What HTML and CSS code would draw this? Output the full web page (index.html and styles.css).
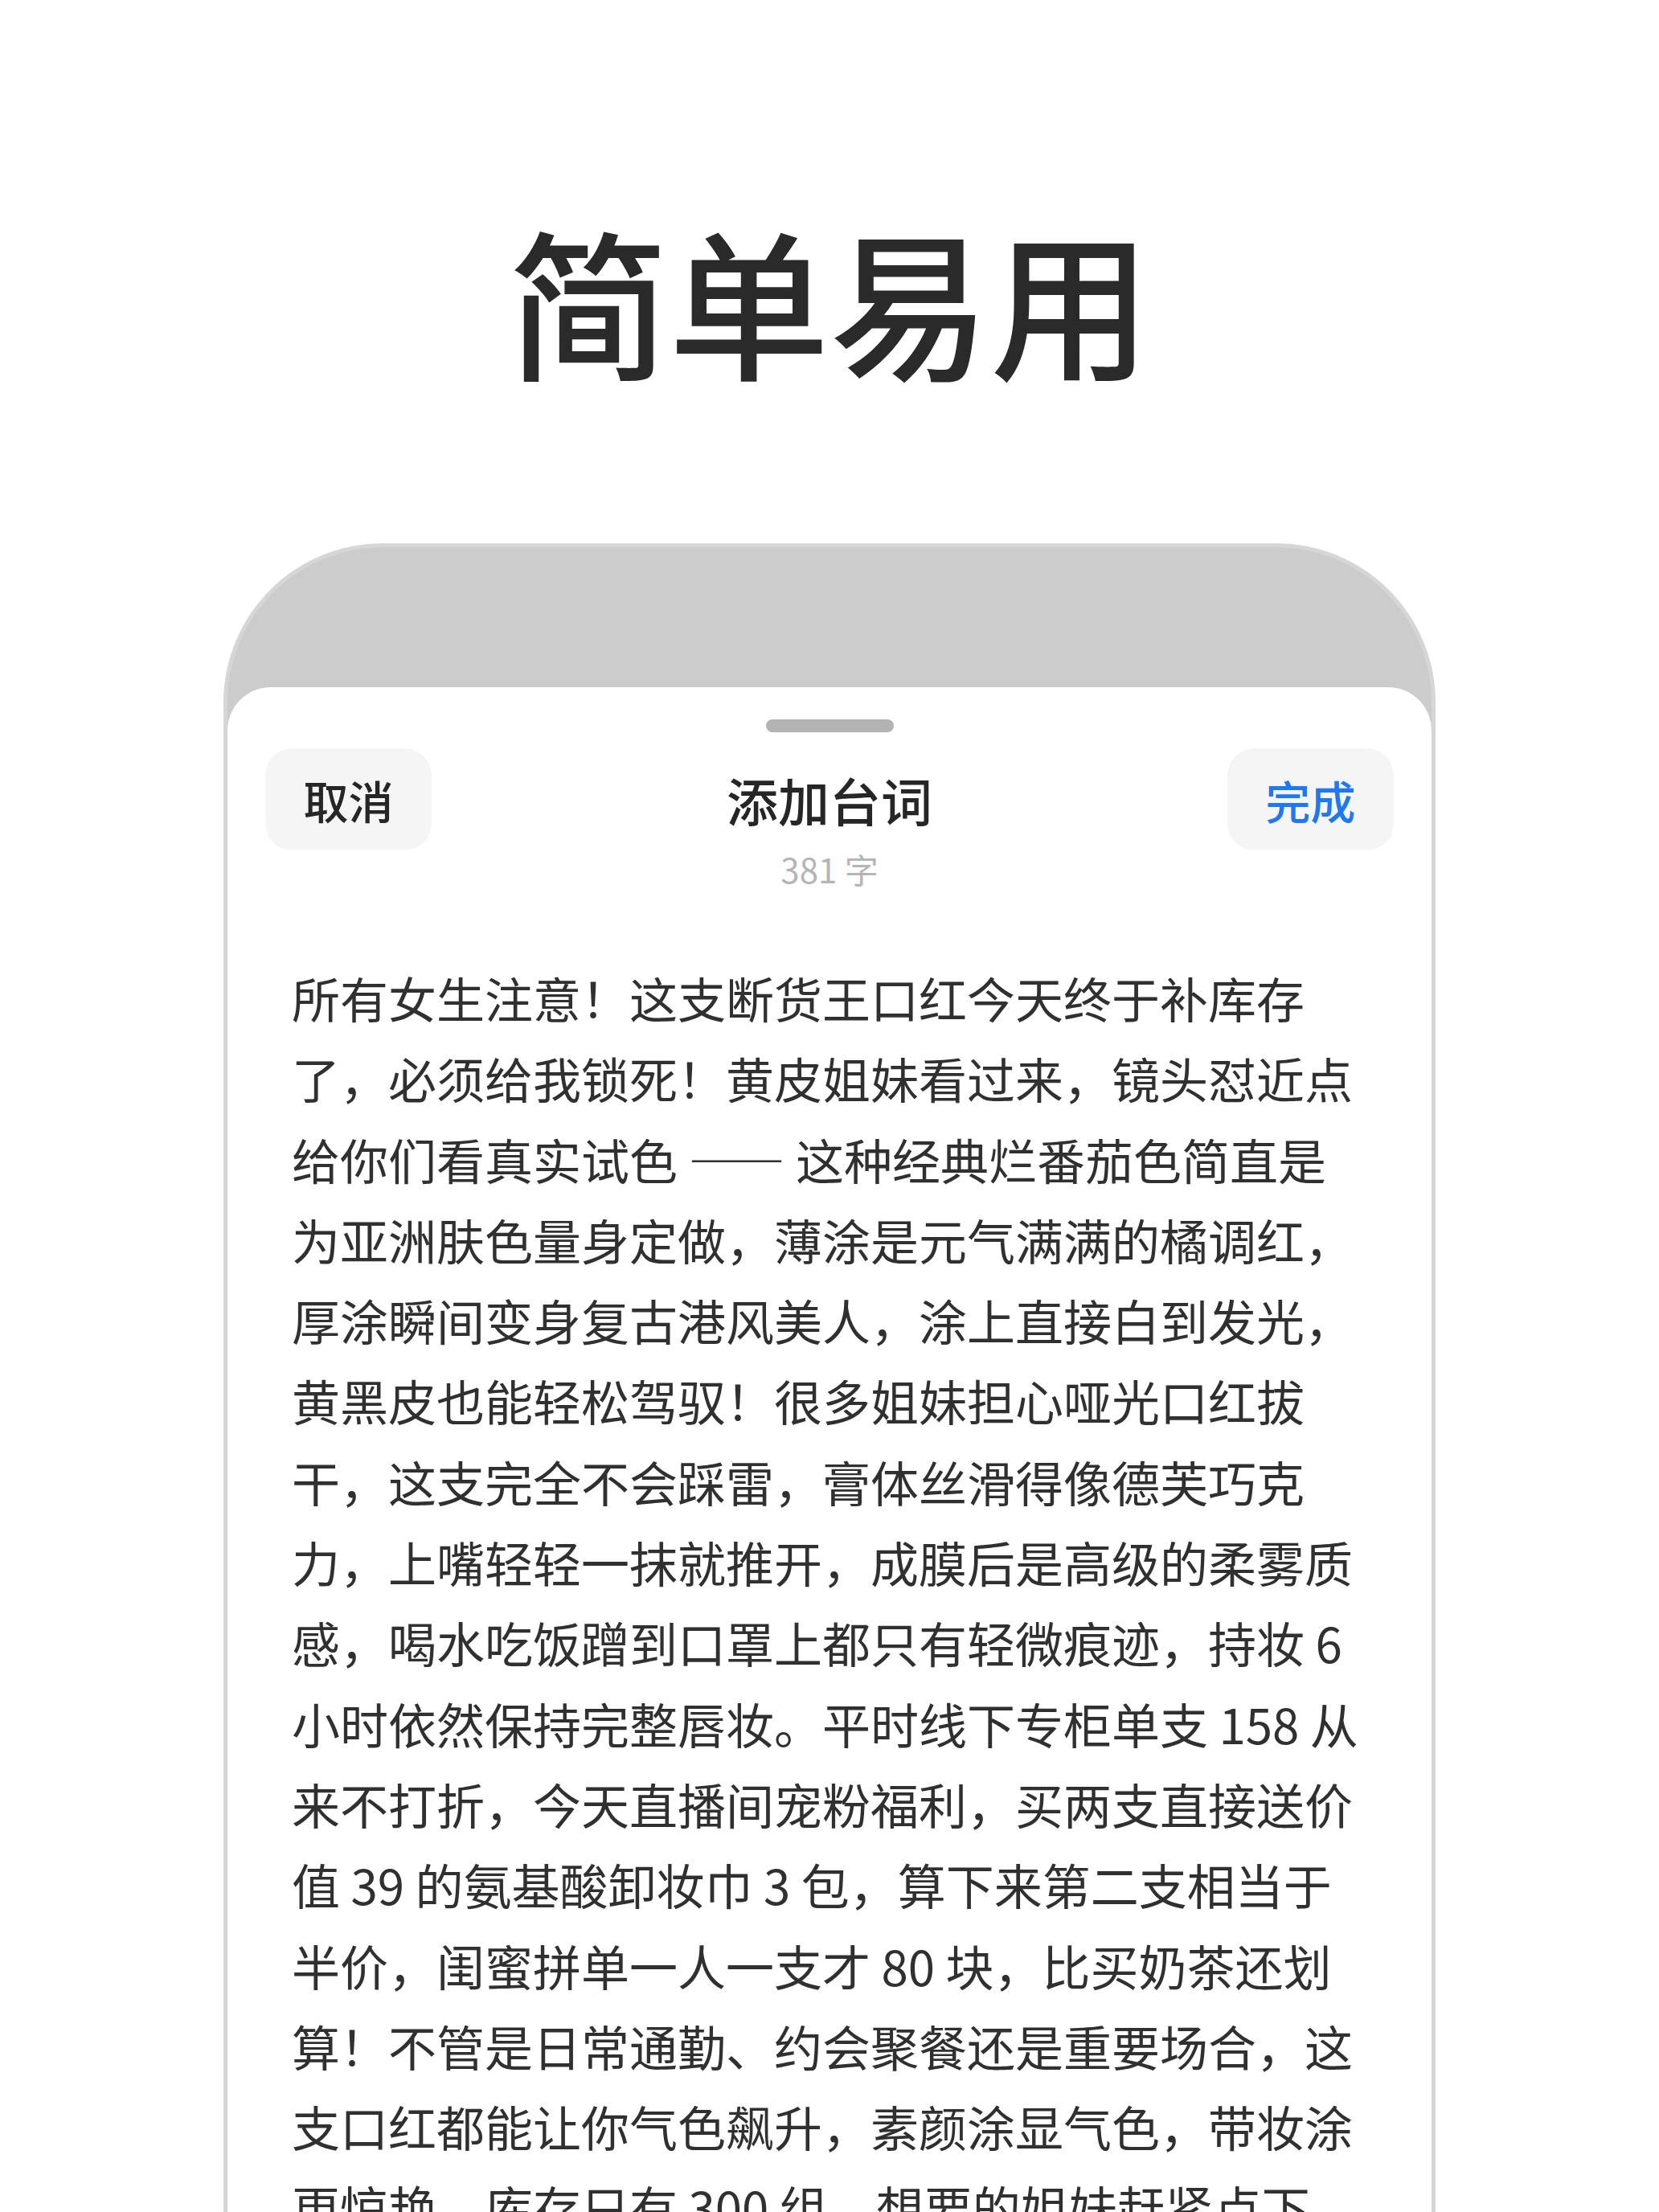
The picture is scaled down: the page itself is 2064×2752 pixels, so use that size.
FILE: index.html
```html
<!DOCTYPE html>
<html lang="zh-CN">
<head>
<meta charset="utf-8">
<title>简单易用</title>
<link rel="stylesheet" href="styles.css">
</head>
<body>
<main class="page">
  <h1 class="hero-title">简单易用</h1>
  <section class="phone">
    <div class="sheet">
      <div class="handle"></div>
      <header class="sheet-header">
        <button class="btn btn-cancel" type="button">取消</button>
        <div class="sheet-heading">
          <h2 class="sheet-title">添加台词</h2>
          <p class="sheet-count">381 字</p>
        </div>
        <button class="btn btn-done" type="button">完成</button>
      </header>
      <p class="script-text">所有女生注意！这支断货王口红今天终于补库存了，必须给我锁死！黄皮姐妹看过来，镜头怼近点给你们看真实试色 —— 这种经典烂番茄色简直是为亚洲肤色量身定做，薄涂是元气满满的橘调红，厚涂瞬间变身复古港风美人，涂上直接白到发光，黄黑皮也能轻松驾驭！很多姐妹担心哑光口红拔干，这支完全不会踩雷，膏体丝滑得像德芙巧克力，上嘴轻轻一抹就推开，成膜后是高级的柔雾质感，喝水吃饭蹭到口罩上都只有轻微痕迹，持妆 6 小时依然保持完整唇妆。平时线下专柜单支 158 从来不打折，今天直播间宠粉福利，买两支直接送价值 39 的氨基酸卸妆巾 3 包，算下来第二支相当于半价，闺蜜拼单一人一支才 80 块，比买奶茶还划算！不管是日常通勤、约会聚餐还是重要场合，这支口红都能让你气色飙升，素颜涂显气色，带妆涂更惊艳，库存只有 300 组，想要的姐妹赶紧点下单！错过今天就要再等一个月了！</p>
    </div>
  </section>
</main>
</body>
</html>
```

FILE: styles.css
```css
html, body {
  margin: 0;
  padding: 0;
  background: #ffffff;
}

body {
  width: 2064px;
  height: 2752px;
  overflow: hidden;
  font-family: "Noto Sans CJK SC", "Noto Sans", sans-serif;
  color: #303030;
}

.page {
  display: flex;
  flex-direction: column;
  align-items: center;
}

.hero-title {
  margin: 271px 0 0;
  font-size: 200px;
  line-height: 200px;
  font-weight: 500;
  color: #2a2a2a;
  text-align: center;
}

.phone {
  box-sizing: border-box;
  width: 1508px;
  height: 2200px;
  margin-top: 205px;
  padding-top: 174px;
  background: #cccccc;
  border: 5px solid #d6d6d6;
  border-bottom: none;
  border-radius: 198px 198px 0 0;
  overflow: hidden;
}

.sheet {
  background: #ffffff;
  border-radius: 54px 54px 0 0;
  min-height: 2000px;
  padding: 40px 0 0;
  display: flex;
  flex-direction: column;
}

.handle {
  width: 159px;
  height: 16px;
  border-radius: 8px;
  background: #b3b3b3;
  align-self: center;
}

.sheet-header {
  display: grid;
  grid-template-columns: 207px 1fr 207px;
  align-items: start;
  margin-top: 20px;
  padding: 0 47px;
}

.btn {
  height: 127px;
  border: none;
  border-radius: 34px;
  background: #f5f5f5;
  font-family: "Noto Sans CJK SC", sans-serif;
  font-size: 56px;
  font-weight: 500;
  line-height: 1;
  padding: 0;
  cursor: pointer;
}

.btn-cancel {
  color: #262626;
}

.btn-done {
  color: #1e78ff;
}

.sheet-heading {
  display: flex;
  flex-direction: column;
  align-items: center;
}

.sheet-title {
  margin: 0;
  font-size: 64px;
  line-height: 127px;
  font-weight: 500;
  color: #262626;
}

.sheet-count {
  margin: -2px 0 0;
  font-size: 42px;
  line-height: 50px;
  color: #b5b5b5;
}

.script-text {
  margin: 85px 0 0 80px;
  width: 1340px;
  font-size: 60px;
  line-height: 100.3px;
  color: #303030;
}
```
